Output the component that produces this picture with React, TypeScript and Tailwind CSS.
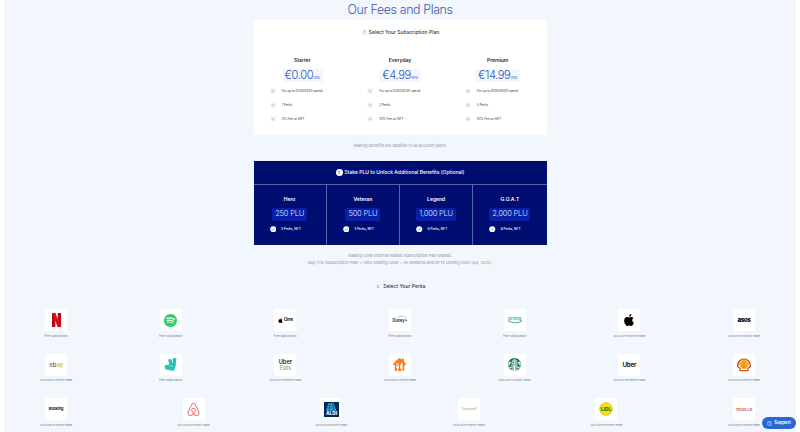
import React from "react";
import { SiSpotify, SiApple, SiDeliveroo, SiStarbucks, SiShell, SiAirbnb, SiJusteat } from "react-icons/si";

function Tick({ dark = false }: { dark?: boolean }) {
  return (
    <svg viewBox="0 0 14 14" className={dark ? "size-[6.5px] shrink-0" : "size-[6px] shrink-0"}>
      <circle cx="7" cy="7" r="6.5" fill={dark ? "#ffffff" : "#eff0f3"} />
      <path d="M4 7.2 6.2 9.4 10 5" fill="none" stroke={dark ? "#52639f" : "#8b9099"} strokeWidth="1.4" />
    </svg>
  );
}

const plans = [
  { name: "Starter", price: "€0.00", features: ["For up to £250/€250 spend", "1 Perks", "3% Fee on NFT"] },
  { name: "Everyday", price: "€4.99", features: ["For up to £250/€250 spend", "2 Perks", "10% Fee on NFT"] },
  { name: "Premium", price: "€14.99", features: ["For up to £500/€500 spend", "3 Perks", "10% Fee on NFT"] },
];

const stakes = [
  { name: "Hero", plu: "250 PLU", perk: "3 Perks, NFT" },
  { name: "Veteran", plu: "500 PLU", perk: "5 Perks, NFT" },
  { name: "Legend", plu: "1,000 PLU", perk: "6 Perks, NFT" },
  { name: "G.O.A.T", plu: "2,000 PLU", perk: "8 Perks, NFT" },
];

function Netflix() {
  return (
    <svg viewBox="0 0 9 14" className="h-[14px] w-[9px]">
      <path d="M0 0h3.3v14H0zM5.7 0H9v14H5.7z" fill="#b50b12" />
      <path d="M0 0h3.3L9 14H5.7z" fill="#e50914" />
    </svg>
  );
}

function AppleOne() {
  return (
    <div className="flex items-center gap-[1px] text-[5px] font-semibold tracking-[-0.2px] text-black">
      <SiApple className="size-[5px]" />
      <span>One</span>
    </div>
  );
}

function Disney() {
  return (
    <svg viewBox="0 0 18 14" className="h-[14px] w-[18px] overflow-visible">
      <path d="M7 4.5C11 2.2 15 3 15.5 7" fill="none" stroke="#6e7891" strokeWidth=".45" />
      <text x="1.6" y="9" fontSize="4.8" fontWeight="700" fontFamily="Inter, sans-serif" fill="#27304b" textLength="12" lengthAdjust="spacingAndGlyphs">Disney</text>
      <path d="M14.2 7.5h2M15.2 6.5v2" stroke="#27304b" strokeWidth=".5" />
    </svg>
  );
}

function Prime() {
  return (
    <svg viewBox="0 0 16 10" className="h-[10px] w-[16px] overflow-visible">
      <text x="1" y="4.7" fontSize="4.6" fontWeight="600" fontFamily="Inter, sans-serif" fill="#2fb9a6" textLength="13.5" lengthAdjust="spacingAndGlyphs">prime</text>
      <path d="M1 5.8Q8 9.6 14.2 6.4" fill="none" stroke="#48a9a5" strokeWidth="1" />
      <path d="m12.6 5.6 2-.1-.5 1.8" fill="none" stroke="#48a9a5" strokeWidth=".7" />
    </svg>
  );
}

function Ebay() {
  return (
    <div className="text-[6px] font-medium leading-none tracking-[-0.1px]">
      <span className="text-[#9a6668]">e</span><span className="text-[#46688a]">b</span><span className="text-[#d8b53c]">a</span><span className="text-[#96b84a]">y</span>
    </div>
  );
}

function UberEats() {
  return (
    <div className="text-center text-[5.8px] font-semibold leading-[5.5px] tracking-[-0.1px] text-[#253126]">
      <div>Uber</div>
      <div className="text-[#9bbd8e]">Eats</div>
    </div>
  );
}

function Aldi() {
  return (
    <svg viewBox="0 0 15 15" className="size-[15px]">
      <path d="M0 0h15v15H0z" fill="#082857" />
      <path d="M4.2 1.2h5.4l2.8 7.5H2z" fill="#37a9d8" />
      <path d="m4 3.4 6.2.4M3 5.8l8.3.2M6.3 1.3 5 8.6M9 1.3l.7 7.4" stroke="#0b3569" strokeWidth=".6" />
      <text x="2" y="13.2" fontSize="4.3" fontWeight="800" fontFamily="Inter, sans-serif" fill="#fff" textLength="11" lengthAdjust="spacingAndGlyphs">ALDI</text>
    </svg>
  );
}

function Lidl() {
  return (
    <svg viewBox="0 0 14 14" className="size-[14px]">
      <circle cx="7" cy="7" r="6.3" fill="#f3e500" stroke="#c9ae3c" strokeWidth=".7" />
      <text x="1.8" y="8.6" fontSize="4.6" fontWeight="800" fontFamily="Inter, sans-serif" fill="#40603f" textLength="10.4" lengthAdjust="spacingAndGlyphs">LIDL</text>
    </svg>
  );
}

type Perk = { logo: React.ReactNode; label: string };
const free = "Free subscription";
const back = "Up to £10/€10 monthly rebate";

const rows: Perk[][] = [
  [
    { logo: <Netflix />, label: free },
    { logo: <SiSpotify className="size-[13px] text-[#29cf68]" />, label: free },
    { logo: <AppleOne />, label: free },
    { logo: <Disney />, label: free },
    { logo: <Prime />, label: free },
    { logo: <SiApple className="size-[12px] text-black" />, label: back },
    { logo: <span className="text-[6.2px] font-extrabold leading-none tracking-[-0.4px] text-black">asos</span>, label: back },
  ],
  [
    { logo: <Ebay />, label: back },
    { logo: <SiDeliveroo className="size-[13px] text-[#20c4b7]" />, label: free },
    { logo: <UberEats />, label: back },
    { logo: <SiJusteat className="size-[13px] text-[#f47d20]" />, label: back },
    { logo: <SiStarbucks className="size-[13px] text-[#147554]" />, label: back },
    { logo: <span className="text-[6.2px] font-semibold leading-none tracking-[-0.2px] text-black">Uber</span>, label: back },
    {
      logo: (
        <div className="relative size-[14px]">
          <SiShell className="size-[14px] text-[#d8481b]" />
          <svg viewBox="0 0 14 14" className="absolute inset-0 size-[14px]">
            <path d="M2 7C2 3 4.5 1.7 7 1.7S12 3 12 7L9 11H5z" fill="#fbc02c" />
            <path d="m6 10-3-5M6.5 10l-1-7M7 10V2M7.5 10l1-7M8 10l3-5" stroke="#dc7622" strokeWidth=".6" />
          </svg>
        </div>
      ),
      label: back,
    },
  ],
  [
    { logo: <span className="text-[3.8px] font-bold leading-none tracking-[-0.1px] text-[#161616]">Booking</span>, label: back },
    { logo: <SiAirbnb className="size-[13px] text-[#df626b]" />, label: back },
    { logo: <Aldi />, label: back },
    { logo: <span className="text-[3.6px] leading-none text-[#b3a85f]">Treatwell</span>, label: back },
    { logo: <Lidl />, label: back },
    { logo: <span className="font-['Liberation_Serif',serif] text-[5px] leading-none tracking-[-0.3px] text-[#b3253b]">TKMAX</span>, label: back },
  ],
];

export default function App() {
  return (
    <div className="relative h-[432px] w-[800px] overflow-hidden bg-white px-[4px] font-['Inter',sans-serif] text-[#343941]">
      <main className="flex h-full flex-col items-center bg-[#f2f7fd]">
        <h1 className="h-[20px] shrink-0 whitespace-nowrap text-[12.4px] font-light leading-[19px] tracking-[-0.38px] text-[#4358a9]">Our Fees and Plans</h1>

        <section className="h-[115px] w-[293px] shrink-0 rounded-[1px] bg-white">
          <div className="flex h-[25px] items-center justify-center gap-[2px] pl-[1px] text-[5px] font-medium">
            <span className="flex size-[5px] items-center justify-center rounded-full bg-[#eeeeee] text-[3.5px] text-[#888]">1</span>
            <span>Select Your Subscription Plan</span>
          </div>
          <div className="grid grid-cols-3 pt-[10px]">
            {plans.map((p) => (
              <div key={p.name} className="flex flex-col items-center">
                <h2 className="h-[10px] text-[5px] font-semibold leading-[10px] text-[#292c33]">{p.name}</h2>
                <div className="mt-[3.5px] flex h-[13px] items-center justify-center rounded-[2px] bg-[#f3f6fe] px-[3px] text-[#3457b8]">
                  <span className="text-[11.2px] font-light leading-[13px] tracking-[-0.45px]">{p.price}</span>
                  <span className="pt-[5px] text-[3.8px] leading-[5px]">/mo</span>
                </div>
                <ul className="mt-[3px] w-full pl-[16px]">
                  {p.features.map((f) => (
                    <li key={f} className="flex h-[13.8px] items-center gap-[6px] whitespace-nowrap text-[3.2px] tracking-[-0.02px] text-[#33363c]">
                      <Tick />
                      {f}
                    </li>
                  ))}
                </ul>
              </div>
            ))}
          </div>
        </section>

        <p className="flex h-[26px] shrink-0 items-center pb-[4px] text-[4.05px] text-[#8b929f]">Staking benefits are additive to all account plans.</p>

        <section className="h-[84px] w-[293px] shrink-0 bg-[#000d70] text-white">
          <div className="flex h-[23px] items-center justify-center gap-[2px] text-[5px] font-medium">
            <span className="flex size-[7px] items-center justify-center rounded-full bg-white text-[4px] text-[#3347a0]">2</span>
            <span>Stake PLU to Unlock Additional Benefits (Optional)</span>
          </div>
          <div className="grid h-[61px] grid-cols-4 divide-x divide-[#5464ad] border-t border-[#5464ad]">
            {stakes.map((s) => (
              <div key={s.name} className="flex flex-col items-center pt-[10px]">
                <h2 className="h-[9px] text-[5px] font-semibold leading-[9px]">{s.name}</h2>
                <div className="mt-[3.5px] flex h-[13px] items-center rounded-[2px] bg-[#0a1fa6] px-[3px] text-[7.5px] font-light tracking-[-0.2px] text-[#dbe3ff]">{s.plu}</div>
                <div className="mt-[4.5px] flex h-[8px] w-full items-center gap-[5px] whitespace-nowrap pl-[16px] text-[3.3px] font-medium tracking-[-0.05px]">
                  <Tick dark />
                  {s.perk}
                </div>
              </div>
            ))}
          </div>
        </section>

        <div className="shrink-0 pt-[7px] text-center text-[4px] leading-[7px] text-[#8b929f]">
          <p>Staking Level Internal related Subscription Plan Market.</p>
          <p>Buy The Subscription Plan + Hero Staking Level = All Rewards and NFTs coming soon (Q4, 2022)</p>
        </div>

        <div className="mt-[16px] flex h-[9px] shrink-0 items-center justify-center gap-[3px] pl-[2px] text-[5px] font-medium">
          <span className="text-[4px] text-[#8b929f]">3.</span>
          <span>Select Your Perks</span>
        </div>

        <section className="mt-[18px] w-[728px] shrink-0">
          {rows.map((row, i) => (
            <div key={i} className="flex h-[44.7px] justify-between">
              {row.map((perk, j) => (
                <div key={j} className="flex w-[40px] flex-col items-center">
                  <div className="flex h-[22px] w-[22px] items-center justify-center rounded-[1px] bg-white">{perk.logo}</div>
                  <p className={`mt-[2.5px] whitespace-nowrap leading-[5px] text-[#6f7681] ${perk.label === free ? "text-[2.8px]" : "text-[2.3px]"}`}>{perk.label}</p>
                </div>
              ))}
            </div>
          ))}
        </section>
      </main>

      <button className="absolute bottom-[3px] right-[4px] flex h-[12px] w-[34px] items-center justify-center gap-[2px] rounded-full bg-[#2768d2] text-[4.2px] font-bold text-white">
        <svg viewBox="0 0 10 10" className="size-[5px]">
          <circle cx="5" cy="5" r="4.3" fill="none" stroke="white" />
          <path d="M3.7 3.8c.2-1.6 2.9-1.4 2.6.2C6.1 5 5 4.8 5 6M5 7v1" fill="none" stroke="white" />
        </svg>
        Support
      </button>
    </div>
  );
}
